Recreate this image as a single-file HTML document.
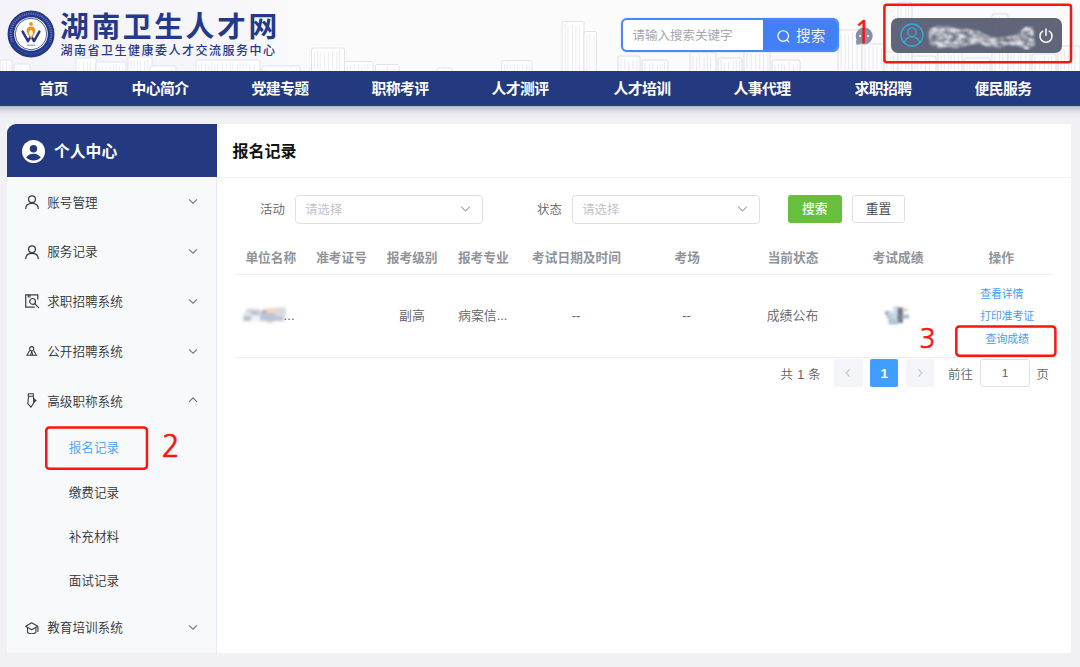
<!DOCTYPE html>
<html lang="zh-CN">
<head>
<meta charset="utf-8">
<title>湖南卫生人才网 - 报名记录</title>
<style>
*{box-sizing:border-box;margin:0;padding:0}
html,body{width:1080px;height:667px;overflow:hidden}
body{position:relative;background:#f0f0f5;font-family:"Liberation Sans","Noto Sans CJK SC",sans-serif;color:#303133;font-size:12.6px}
.abs{position:absolute}
.t{position:absolute;white-space:nowrap;line-height:1}
.c{transform:translate(-50%,-50%)}
.lc{transform:translate(0,-50%)}
/* header */
#hdr{left:0;top:0;width:1080px;height:71px;background:linear-gradient(90deg,#f3f3f9 0,#f5f5fa 180px,#fbfbfb 340px,#fbfbfb 100%);overflow:hidden}
#title{left:60px;top:13.2px;font-size:28.8px;font-weight:700;color:#24398a;letter-spacing:2.6px}
#subtitle{left:60.6px;top:44.5px;font-size:12px;font-weight:500;color:#24398a;letter-spacing:1.5px}
#nav{left:0;top:71px;width:1080px;height:35px;background:#233a80}
#navsh{left:-40px;top:71px;width:1160px;height:35px;background:#233a80;box-shadow:0 2px 8px rgba(60,60,80,.45);clip-path:inset(0 -10px -16px -10px)}
.nv{top:17.9px;color:#fff;font-weight:700;font-size:14.8px;letter-spacing:-.55px}
/* search */
#sbox{left:621px;top:18px;width:217.5px;height:34px;border:2px solid #4a87f8;border-radius:6px;background:#fff;overflow:hidden;box-shadow:0 0 1.5px rgba(69,131,247,.5)}
#sbtn{left:139.600px;top:-2px;width:80px;height:36px;background:#4380f8}
/* user pill */
#pill{left:891px;top:17.800px;width:171px;height:35px;border-radius:7px;background:rgba(84,89,112,.93)}
.redbox{border:2px solid #fb1510;position:absolute}
.rednum{color:#fb1510;font-family:"NanumGothic","Liberation Sans",sans-serif;font-weight:400;-webkit-text-stroke:.55px #fb1510}
/* sidebar */
#side{left:7px;top:124px;width:210px;height:529px;background:#f8f9fb;border-right:1px solid #e9eaf1}
#sidehd{left:0;top:0;width:210px;height:53px;background:#233a80;border-top-left-radius:9px}
#sidecorner{left:7px;top:124px;width:12px;height:12px;background:#fff}
.mi{left:40.2px;font-size:12.6px;color:#303133;font-weight:350}
.sub{left:61.7px;font-size:12.6px;color:#303133;font-weight:350}
/* content */
#main{left:217px;top:124px;width:854px;height:529px;background:#fff}
.sel{height:29px;border:1px solid #dcdfe6;border-radius:4px;background:#fff}
.ph{color:#c0c4cc;font-size:12.4px}
.th{color:#909399;font-weight:700;font-size:12.7px}
.td{color:#606266;font-size:12.9px;font-weight:350}
.lk{color:#409eff;font-size:10.8px}
.pg{font-size:12.4px;color:#606266;font-weight:350}
</style>
</head>
<body>
<!-- HEADER -->
<div id="hdr" class="abs">
<svg class="abs" style="left:0;top:0" width="1080" height="71" viewBox="0 0 1080 71"><path d="M0 72V61l1.500-1H11l1 1V72" fill="#fefefe" stroke="#e3e3e7" stroke-width="1"/><path d="M3.0 62.7V71.7M6.5 62.5V71.8M10.0 64.8V69.6" stroke="#e3e3e7" stroke-width=".800" fill="none" opacity=".8"/><path d="M14 72V65l1.500-1H29l1 1V72" fill="#fefefe" stroke="#e3e3e7" stroke-width="1"/><path d="M17.0 66.7V70.4M20.2 66.5V71.7M23.3 68.8V69.5M27.7 68.4V71.4" stroke="#e3e3e7" stroke-width=".800" fill="none" opacity=".8"/><path d="M76 72V59l1.500-1H95l1 1V72" fill="#fefefe" stroke="#e3e3e7" stroke-width="1"/><path d="M79.0 61.9V69.8M83.5 62.6V71.7M87.4 62.0V70.5M90.4 61.4V71.7" stroke="#e3e3e7" stroke-width=".800" fill="none" opacity=".8"/><path d="M96 72V63l1.500-1H125l1 1V72" fill="#fefefe" stroke="#e3e3e7" stroke-width="1"/><path d="M99.0 66.6V70.4M102.3 66.7V70.3M106.8 66.5V70.5M110.3 65.8V70.7M113.3 64.9V69.6M116.0 64.1V70.1M119.2 65.6V70.6M122.5 67.0V71.4" stroke="#e3e3e7" stroke-width=".800" fill="none" opacity=".8"/><path d="M128 72V58l1.500-1H151l1 1V72" fill="#fefefe" stroke="#e3e3e7" stroke-width="1"/><path d="M131.0 59.6V70.1M134.2 60.1V69.8M137.5 60.7V69.3M140.3 59.2V71.3M144.6 60.8V71.3M147.9 59.5V70.6" stroke="#e3e3e7" stroke-width=".800" fill="none" opacity=".8"/><path d="M150 72V67l1.500-1H175l1 1V72" fill="#fefefe" stroke="#e3e3e7" stroke-width="1"/><path d="M153.0 70.1V69.3M157.7 70.2V69.1M160.3 68.9V69.1M164.6 69.2V69.2M168.6 70.5V71.1M171.6 69.3V71.6" stroke="#e3e3e7" stroke-width=".800" fill="none" opacity=".8"/><path d="M196 72V61l1.500-1H259l1 1V72" fill="#fefefe" stroke="#e3e3e7" stroke-width="1"/><path d="M199.0 64.9V71.0M201.6 62.1V71.5M205.9 63.1V71.1M208.8 64.9V70.7M211.8 62.2V71.8M214.8 64.0V71.6M217.5 63.5V71.3M222.3 62.4V70.4M226.6 63.2V69.0M230.2 62.7V70.8M232.9 63.3V71.3M237.5 64.5V70.5M240.1 62.8V71.3M243.2 62.7V69.4M246.1 62.2V69.2M249.9 65.0V70.8M254.5 64.0V69.6" stroke="#e3e3e7" stroke-width=".800" fill="none" opacity=".8"/><path d="M262 72V67l1.500-1H299l1 1V72" fill="#fefefe" stroke="#e3e3e7" stroke-width="1"/><path d="M265.0 69.5V71.7M268.1 70.6V69.3M272.7 69.0V70.0M277.1 69.9V69.6M280.8 70.0V69.9M284.0 70.8V69.1M286.8 70.9V69.1M290.8 68.1V69.3M293.7 70.9V70.0M296.5 68.5V70.1" stroke="#e3e3e7" stroke-width=".800" fill="none" opacity=".8"/><path d="M311.5 72V49l1.500-1H343.5l1 1V72" fill="#fefefe" stroke="#e3e3e7" stroke-width="1"/><path d="M314.5 52.2V69.2M317.6 50.0V69.2M320.2 52.6V71.7M324.6 52.3V69.4M328.4 52.6V71.4M332.5 51.0V69.3M336.8 51.4V70.4M339.4 50.1V70.2" stroke="#e3e3e7" stroke-width=".800" fill="none" opacity=".8"/><path d="M344.5 72V62.5l1.500-1H372l1 1V72" fill="#fefefe" stroke="#e3e3e7" stroke-width="1"/><path d="M347.5 66.1V70.2M350.4 64.6V69.7M354.2 63.5V69.5M358.6 63.8V70.4M362.0 65.9V71.1M365.1 65.0V69.1M367.9 63.8V70.1" stroke="#e3e3e7" stroke-width=".800" fill="none" opacity=".8"/><path d="M375.5 72V65.5l1.500-1H398l1 1V72" fill="#fefefe" stroke="#e3e3e7" stroke-width="1"/><path d="M378.5 68.0V70.7M383.0 68.8V71.8M387.5 67.1V71.1M392.0 67.8V69.6M394.9 69.1V71.5" stroke="#e3e3e7" stroke-width=".800" fill="none" opacity=".8"/><path d="M437 72V69l1.500-1H451l1 1V72" fill="#fefefe" stroke="#e3e3e7" stroke-width="1"/><path d="M440.0 71.5V71.0M443.8 72.7V69.9M446.4 70.9V70.4" stroke="#e3e3e7" stroke-width=".800" fill="none" opacity=".8"/><path d="M501.5 72V61.5l1.500-1H531l1 1V72" fill="#fefefe" stroke="#e3e3e7" stroke-width="1"/><path d="M504.5 64.6V70.5M507.3 63.2V69.5M510.7 64.8V69.0M514.6 64.5V70.2M517.9 65.2V70.6M522.5 63.4V69.4M526.9 64.3V70.7M529.8 64.8V70.9" stroke="#e3e3e7" stroke-width=".800" fill="none" opacity=".8"/><path d="M562 72V22.5l1.500-1H583l1 1V72" fill="#fefefe" stroke="#e3e3e7" stroke-width="1"/><path d="M565.0 23.9V71.8M567.9 25.9V71.5M572.5 24.6V70.3M575.9 25.4V71.7M579.4 26.3V71.5" stroke="#e3e3e7" stroke-width=".800" fill="none" opacity=".8"/><path d="M584 72V32.5l1.500-1H595.5l1 1V72" fill="#fefefe" stroke="#e3e3e7" stroke-width="1"/><path d="M587.0 34.5V71.1M589.7 33.6V69.2M594.1 35.9V69.6" stroke="#e3e3e7" stroke-width=".800" fill="none" opacity=".8"/><path d="M618 72V57l1.500-1H639l1 1V72" fill="#fdfdfd" stroke="#dedee2" stroke-width="1"/><path d="M621.0 58.5V70.2M624.7 59.7V69.2M629.0 60.9V71.6M633.0 60.0V69.8M637.0 60.5V71.1" stroke="#dedee2" stroke-width=".800" fill="none" opacity=".8"/><path d="M642 72V61l1.500-1H667l1 1V72" fill="#fdfdfd" stroke="#dedee2" stroke-width="1"/><path d="M645.0 63.2V70.2M649.6 64.1V71.1M652.7 63.0V70.1M657.5 64.7V70.8M661.0 64.5V71.1M664.5 62.0V71.4" stroke="#dedee2" stroke-width=".800" fill="none" opacity=".8"/><path d="M690 72V53l1.500-1H715l1 1V72" fill="#fdfdfd" stroke="#dedee2" stroke-width="1"/><path d="M693.0 56.1V70.2M696.4 56.9V70.1M699.3 54.2V69.1M704.1 56.8V70.2M707.4 54.3V71.2M710.5 56.8V69.3" stroke="#dedee2" stroke-width=".800" fill="none" opacity=".8"/><path d="M718 72V59l1.500-1H741l1 1V72" fill="#fdfdfd" stroke="#dedee2" stroke-width="1"/><path d="M721.0 60.4V71.3M724.3 62.8V71.5M728.6 62.0V70.4M733.3 60.8V70.4M736.3 60.3V71.9M739.6 60.4V71.8" stroke="#dedee2" stroke-width=".800" fill="none" opacity=".8"/><path d="M744 72V51l1.500-1H769l1 1V72" fill="#fdfdfd" stroke="#dedee2" stroke-width="1"/><path d="M747.0 52.9V69.3M751.1 54.2V70.0M755.8 54.6V69.8M759.7 54.1V69.8M763.5 53.5V71.5M767.9 53.5V71.8" stroke="#dedee2" stroke-width=".800" fill="none" opacity=".8"/><path d="M772 72V61l1.500-1H799l1 1V72" fill="#fdfdfd" stroke="#dedee2" stroke-width="1"/><path d="M775.0 64.6V71.2M778.5 64.0V69.4M781.8 63.2V70.7M784.4 64.6V71.9M789.2 62.5V71.5M793.6 64.5V71.3M797.4 63.4V69.8" stroke="#dedee2" stroke-width=".800" fill="none" opacity=".8"/><path d="M838 72V31l1.500-1H861l1 1V72" fill="#fdfdfd" stroke="#dedee2" stroke-width="1"/><path d="M841.0 34.5V69.0M845.2 34.8V69.2M848.6 34.5V69.5M852.5 32.3V70.1M857.1 32.9V70.1" stroke="#dedee2" stroke-width=".800" fill="none" opacity=".8"/><path d="M862 72V45l1.500-1H883l1 1V72" fill="#fdfdfd" stroke="#dedee2" stroke-width="1"/><path d="M865.0 47.8V71.9M869.0 46.8V69.4M873.0 46.9V69.3M877.0 47.0V69.5M881.6 48.7V69.4" stroke="#dedee2" stroke-width=".800" fill="none" opacity=".8"/><path d="M884 72V53l1.500-1H905l1 1V72" fill="#fdfdfd" stroke="#dedee2" stroke-width="1"/><path d="M887.0 56.1V70.2M890.8 57.0V70.9M893.5 56.1V70.5M897.3 55.8V71.3M900.4 54.2V69.7" stroke="#dedee2" stroke-width=".800" fill="none" opacity=".8"/><path d="M898 72V3l1.500-1H911l1 1V72" fill="#fdfdfd" stroke="#dedee2" stroke-width="1"/><path d="M901.0 6.1V71.6M905.8 6.5V70.5M908.4 6.5V70.1" stroke="#dedee2" stroke-width=".800" fill="none" opacity=".8"/><path d="M912 72V57l1.500-1H935l1 1V72" fill="#fdfdfd" stroke="#dedee2" stroke-width="1"/><path d="M915.0 58.1V69.8M917.7 59.4V71.6M921.1 60.7V69.8M925.5 58.9V70.8M929.4 58.1V70.8" stroke="#dedee2" stroke-width=".800" fill="none" opacity=".8"/><path d="M938 72V51l1.500-1H961l1 1V72" fill="#fdfdfd" stroke="#dedee2" stroke-width="1"/><path d="M941.0 54.3V69.4M944.3 54.1V69.6M948.4 53.3V71.5M951.0 54.7V69.2M954.3 54.3V70.8M958.2 54.5V71.0" stroke="#dedee2" stroke-width=".800" fill="none" opacity=".8"/><path d="M964 72V59l1.500-1H989l1 1V72" fill="#fdfdfd" stroke="#dedee2" stroke-width="1"/><path d="M967.0 60.8V70.5M969.7 60.8V71.1M974.3 60.4V69.7M977.1 63.0V71.5M979.9 60.6V69.2M983.9 62.7V70.5M986.8 61.0V70.6" stroke="#dedee2" stroke-width=".800" fill="none" opacity=".8"/><path d="M992 72V15l1.500-1H1007l1 1V72" fill="#fdfdfd" stroke="#dedee2" stroke-width="1"/><path d="M995.0 16.5V71.3M999.5 16.3V69.1M1002.7 17.7V70.0" stroke="#dedee2" stroke-width=".800" fill="none" opacity=".8"/><path d="M1008 72V41l1.500-1H1029l1 1V72" fill="#fdfdfd" stroke="#dedee2" stroke-width="1"/><path d="M1011.0 42.2V69.5M1014.0 44.2V71.9M1018.3 42.5V71.4M1021.0 43.0V71.0M1025.7 43.8V70.9" stroke="#dedee2" stroke-width=".800" fill="none" opacity=".8"/><path d="M1032 72V55l1.500-1H1055l1 1V72" fill="#fdfdfd" stroke="#dedee2" stroke-width="1"/><path d="M1035.0 56.5V71.4M1039.7 58.9V69.9M1044.5 56.2V69.3M1048.6 58.0V69.5M1051.4 56.6V71.6" stroke="#dedee2" stroke-width=".800" fill="none" opacity=".8"/><path d="M1058 72V47l1.500-1H1079l1 1V72" fill="#fdfdfd" stroke="#dedee2" stroke-width="1"/><path d="M1061.0 49.6V70.4M1064.4 50.2V69.5M1068.7 48.1V71.5M1071.7 48.7V70.3M1074.8 49.9V71.0" stroke="#dedee2" stroke-width=".800" fill="none" opacity=".8"/></svg>
</div>
<!-- logo -->
<svg class="abs" style="left:6.5px;top:10px" width="48" height="48" viewBox="0 0 48 48">
<circle cx="24" cy="24" r="23.5" fill="#24398a"/>
<path d="M5.400 31.800A20.200 20.200 0 1 1 42.600 31.800" fill="none" stroke="#b4bcdc" stroke-width="2.300" stroke-dasharray="1.300 1" opacity=".42"/><path d="M7.600 35.400A20.200 20.200 0 0 0 40.400 35.400" fill="none" stroke="#b4bcdc" stroke-width="1.200" stroke-dasharray=".600 .700" opacity=".3"/>
<circle cx="24" cy="24" r="16.8" fill="#fff"/>
<circle cx="24" cy="24" r="15.7" fill="none" stroke="#24398a" stroke-width=".8"/>
<path d="M15.6 21.6L21 31.2 24 26l3 5.200 5.400-9.600" fill="none" stroke="#24398a" stroke-width="2.500" stroke-linecap="round" stroke-linejoin="round"/>
<path d="M24 16.600c-2.700 0-4.400 1.900-4.400 4.100 0 2.400 2.300 4.700 4.400 8.500 2.100-3.800 4.400-6.100 4.400-8.500 0-2.200-1.700-4.100-4.400-4.100z" fill="#ee9220"/>
<path d="M24 19.600c1.300 1.300 2 2.400 2 3.500 0 1.100-.9 2-2 3.800-1.100-1.800-2-2.700-2-3.800 0-1.100.7-2.200 2-3.500z" fill="#fff"/>
<circle cx="24" cy="13.900" r="1.900" fill="#ee9220"/>
<rect x="19.800" y="34.600" width="8.400" height="1.100" fill="#8d97c2"/>
</svg>
<div id="title" class="t">湖南卫生人才网</div>
<div id="subtitle" class="t">湖南省卫生健康委人才交流服务中心</div>

<!-- search -->
<div id="sbox" class="abs">
  <div class="t lc" style="left:9.400px;top:16.200px;font-size:12.500px;color:#a4a8b0">请输入搜索关键字</div>
  <div id="sbtn" class="abs">
    <svg class="abs" style="left:13px;top:11px" width="15" height="15" viewBox="0 0 15 15" fill="none" stroke="#fff" stroke-width="1.150"><circle cx="7.200" cy="7" r="5.300"/><path d="M10.900 10.900l2.400 2.500"/></svg>
    <div class="t lc" style="left:33.500px;top:18.200px;font-size:14.600px;color:#fff;font-weight:350">搜索</div>
  </div>
</div>
<!-- bell-ish + 1 -->
<svg class="abs" style="left:854.600px;top:27.200px" width="19" height="19" viewBox="0 0 19 19"><circle cx="9.200" cy="9" r="8.500" fill="#8590a8"/><path d="M1.200 12.500v5h5z" fill="#8590a8"/><circle cx="5.100" cy="9.100" r="1" fill="#fff"/><circle cx="13" cy="9.100" r="1" fill="#fff"/></svg>
<div class="t rednum" style="left:853.800px;top:17.400px;font-size:30.500px">1</div>
<!-- user pill -->
<svg width="0" height="0" style="position:absolute"><defs>
<filter id="nz" x="-10%" y="-30%" width="120%" height="160%"><feTurbulence type="fractalNoise" baseFrequency="0.15 0.3" numOctaves="3" seed="11" result="n"/><feColorMatrix in="n" type="matrix" values="0 0 0 0 1  0 0 0 0 1  0 0 0 0 1  0 0 0 2.400 -.620" result="a"/><feComposite in="a" in2="SourceGraphic" operator="in" result="c"/><feGaussianBlur in="c" stdDeviation="0.900"/></filter>
<filter id="nz2" x="-20%" y="-30%" width="140%" height="160%"><feTurbulence type="fractalNoise" baseFrequency="0.160 0.260" numOctaves="2" seed="3" result="n"/><feColorMatrix in="n" type="matrix" values="0 0 0 0 .580  0 0 0 0 .620  0 0 0 0 .700  0 0 0 3.600 -1.300" result="a"/><feComposite in="a" in2="SourceGraphic" operator="in" result="c"/><feGaussianBlur in="c" stdDeviation="0.600"/></filter>
<filter id="bl2" x="-20%" y="-20%" width="140%" height="140%"><feGaussianBlur stdDeviation="1.100"/></filter>
<filter id="bl1" x="-20%" y="-40%" width="140%" height="180%"><feGaussianBlur stdDeviation="1.500"/></filter>
</defs></svg>
<div id="pill" class="abs">
  <svg class="abs" style="left:8.500px;top:5.500px" width="24" height="24" viewBox="0 0 24 24" fill="none" stroke="#3aa9de" stroke-width="1.300"><circle cx="12" cy="12" r="11"/><circle cx="12" cy="9.100" r="4.300"/><path d="M4.300 19.800c1-3.900 4-6 7.700-6s6.700 2.100 7.700 6"/></svg>
  <svg class="abs" style="left:33px;top:4px" width="116" height="28" viewBox="0 0 116 28"><g filter="url(#nz)" opacity=".82"><path d="M4 8l8-4 12 0 10 3 10 0 10 2 8 4 10 3 10-1 10-2 9-8 8 0 2 19-8 4-9-4-10-1-10 3-10-1-10-3-10 1-10 3-10-1-10 1-8-4z" fill="#fff"/></g></svg>
  <svg class="abs" style="left:147.400px;top:10.500px" width="16" height="16" viewBox="0 0 16 16" fill="none" stroke="#fff" stroke-width="1.500" stroke-linecap="round"><path d="M8 1v6.200"/><path d="M4.700 3.200a6 6 0 1 0 6.600 0"/></svg>
</div>

<!-- NAV -->
<div id="navsh" class="abs"></div>
<div id="nav" class="abs">
  <div class="t c nv" style="left:53.500px">首页</div>
  <div class="t c nv" style="left:160px">中心简介</div>
  <div class="t c nv" style="left:280px">党建专题</div>
  <div class="t c nv" style="left:400px">职称考评</div>
  <div class="t c nv" style="left:520px">人才测评</div>
  <div class="t c nv" style="left:642px">人才培训</div>
  <div class="t c nv" style="left:762px">人事代理</div>
  <div class="t c nv" style="left:883px">求职招聘</div>
  <div class="t c nv" style="left:1003px">便民服务</div>
</div>

<!-- SIDEBAR -->
<div id="sidecorner" class="abs"></div>
<div id="side" class="abs">
  <div id="sidehd" class="abs">
    <svg class="abs" style="left:15px;top:16px" width="23" height="23" viewBox="0 0 23 23"><circle cx="11.500" cy="11.500" r="11.500" fill="#fff"/><circle cx="11.500" cy="8.800" r="3.700" fill="#233a80"/><path d="M4.200 17.600c1.400-2.600 4-3.900 7.300-3.900s5.900 1.300 7.300 3.900c-1.800 2-4.400 3-7.300 3s-5.500-1-7.300-3z" fill="#233a80"/></svg>
    <div class="t lc" style="left:47px;top:27.800px;font-size:15.800px;font-weight:700;color:#fff">个人中心</div>
  </div>
  <!-- menu rows placed relative to #side (top 124) -->
  <div class="t lc mi" style="top:78.700px">账号管理</div>
  <div class="t lc mi" style="top:128.400px">服务记录</div>
  <div class="t lc mi" style="top:178.200px">求职招聘系统</div>
  <div class="t lc mi" style="top:227.900px">公开招聘系统</div>
  <div class="t lc mi" style="top:277.600px">高级职称系统</div>
  <div class="t lc sub" style="top:324px;color:#409eff">报名记录</div>
  <div class="t lc sub" style="top:368.500px">缴费记录</div>
  <div class="t lc sub" style="top:413px">补充材料</div>
  <div class="t lc sub" style="top:457px">面试记录</div>
  <div class="t lc mi" style="top:504.200px">教育培训系统</div>
  <!-- icons -->
  <svg class="abs" style="left:18px;top:71px" width="14" height="14" viewBox="0 0 14 14" fill="none" stroke="#3c3c3e" stroke-width="1.250"><circle cx="7" cy="4.300" r="3.400"/><path d="M.700 13.900c0-3.500 2.600-5.500 6.300-5.500s6.300 2 6.300 5.500"/></svg>
  <svg class="abs" style="left:18px;top:121.200px" width="14" height="14" viewBox="0 0 14 14" fill="none" stroke="#3c3c3e" stroke-width="1.250"><circle cx="7" cy="4.300" r="3.400"/><path d="M.700 13.900c0-3.500 2.600-5.500 6.300-5.500s6.300 2 6.300 5.500"/></svg>
  <svg class="abs" style="left:18px;top:170.400px" width="14.500" height="14.500" viewBox="0 0 14.500 14.500" fill="none" stroke="#3c3c3e" stroke-width="1.200"><path d="M12.800 5.400V.800H.700v12.400h9"/><path d="M3.300 .800v2.600M4.900 .800v2.600"/><circle cx="7.600" cy="7.400" r="2.900"/><path d="M9.700 9.600l4.200 4.200"/></svg>
  <svg class="abs" style="left:19.400px;top:222px" width="11.400" height="10" viewBox="0 0 11.400 10" fill="none" stroke="#3c3c3e" stroke-width="1.050"><circle cx="5.700" cy="2.700" r="2.100"/><path d="M3.900 4.200L.900 9.300h9.600L7.500 4.200"/><path d="M5.700 5.200L4.600 9.300M5.700 5.200l1.100 4.100"/></svg>
  <svg class="abs" style="left:20.300px;top:269.400px" width="10" height="15" viewBox="0 0 10 15" fill="none" stroke="#3c3c3e" stroke-width="1.100" stroke-linejoin="round"><path d="M1.300 .800h5v2.500h-5z"/><path d="M1.600 3.300L.800 10.700l3.100 3.500 3-4.600-.500-6.300"/><path d="M6.600 5.200l2.800 2.300-2.700 2.200" fill="#3c3c3e" stroke-width=".600"/></svg>
  <svg class="abs" style="left:18px;top:497.500px" width="14" height="12.500" viewBox="0 0 14 12.500" fill="none" stroke="#3c3c3e" stroke-width="1.100" stroke-linejoin="round"><path d="M6.700 .800L.700 4.300l6 3.500 6-3.500z"/><path d="M2.500 5.600v4.800c1.100 1 2.600 1.500 4.200 1.500s3.100-.500 4.200-1.500V5.600"/><path d="M12.900 4.600v5.300"/></svg>
  <!-- arrows -->
  <svg class="abs" style="left:181.200px;top:73.4px" width="10" height="8" viewBox="0 0 10 8" fill="none" stroke="#78787a" stroke-width="1.100"><path d="M1 2.300L5 6.200l4-3.900"/></svg>
  <svg class="abs" style="left:181.200px;top:123.4px" width="10" height="8" viewBox="0 0 10 8" fill="none" stroke="#78787a" stroke-width="1.100"><path d="M1 2.300L5 6.200l4-3.900"/></svg>
  <svg class="abs" style="left:181.200px;top:173.4px" width="10" height="8" viewBox="0 0 10 8" fill="none" stroke="#78787a" stroke-width="1.100"><path d="M1 2.300L5 6.200l4-3.900"/></svg>
  <svg class="abs" style="left:181.200px;top:223.4px" width="10" height="8" viewBox="0 0 10 8" fill="none" stroke="#78787a" stroke-width="1.100"><path d="M1 2.300L5 6.200l4-3.900"/></svg>
  <svg class="abs" style="left:181.200px;top:271.9px" width="10" height="8" viewBox="0 0 10 8" fill="none" stroke="#707072" stroke-width="1.100"><path d="M1 5.900L5 1.800l4 4.100"/></svg>
  <svg class="abs" style="left:181.200px;top:499.4px" width="10" height="8" viewBox="0 0 10 8" fill="none" stroke="#78787a" stroke-width="1.100"><path d="M1 2.300L5 6.200l4-3.900"/></svg>
</div>
<div class="t rednum" style="left:161.500px;top:430.500px;font-size:30px">2</div>

<!-- MAIN -->
<div id="main" class="abs">
  <div class="t lc" style="left:15.500px;top:27.600px;font-size:16px;font-weight:700;color:#111">报名记录</div>
  <div class="abs" style="left:0;top:52.500px;width:854px;height:1px;background:#f3f3f5"></div>

  <!-- filter row : coords relative to #main (217,124) -->
  <div class="t lc" style="left:43px;top:86.300px;font-size:12.400px;color:#606266;font-weight:350">活动</div>
  <div class="abs sel" style="left:77.700px;top:70.700px;width:188px"><div class="t lc ph" style="left:9.500px;top:14.300px">请选择</div>
    <svg class="abs" style="left:164.500px;top:9.300px" width="11" height="8" viewBox="0 0 11 8" fill="none" stroke="#a6aab2" stroke-width="1.150"><path d="M1 1.600L5.500 6l4.500-4.400"/></svg></div>
  <div class="t lc" style="left:320px;top:86.300px;font-size:12.400px;color:#606266;font-weight:350">状态</div>
  <div class="abs sel" style="left:354.700px;top:70.700px;width:188.300px"><div class="t lc ph" style="left:9.500px;top:14.300px">请选择</div>
    <svg class="abs" style="left:164.500px;top:9.300px" width="11" height="8" viewBox="0 0 11 8" fill="none" stroke="#a6aab2" stroke-width="1.150"><path d="M1 1.600L5.500 6l4.500-4.400"/></svg></div>
  <div class="abs" style="left:571px;top:70.700px;width:53.500px;height:28px;border-radius:3px;background:#66c03b"><div class="t c" style="left:50%;top:14.800px;color:#fff;font-weight:500;font-size:12.700px">搜索</div></div>
  <div class="abs" style="left:634.800px;top:70.700px;width:53.400px;height:28px;border-radius:3px;border:1px solid #dcdfe6;background:#fff"><div class="t c" style="left:50%;top:13.800px;color:#3a3c40;font-size:12.700px;font-weight:350">重置</div></div>
  <!-- table header -->
  <div class="t c th" style="left:53.800px;top:133.700px">单位名称</div>
  <div class="t c th" style="left:124.500px;top:133.700px">准考证号</div>
  <div class="t c th" style="left:195.200px;top:133.700px">报考级别</div>
  <div class="t c th" style="left:266.300px;top:133.700px">报考专业</div>
  <div class="t c th" style="left:359.500px;top:133.700px">考试日期及时间</div>
  <div class="t c th" style="left:470.200px;top:133.700px">考场</div>
  <div class="t c th" style="left:576px;top:133.700px">当前状态</div>
  <div class="t c th" style="left:681px;top:133.700px">考试成绩</div>
  <div class="t c th" style="left:784.300px;top:133.700px">操作</div>
  <div class="abs" style="left:18px;top:149.800px;width:818px;height:1px;background:#ebeef5"></div>
  <!-- row -->
  <svg class="abs" style="left:21px;top:180px" width="56" height="24" viewBox="0 0 56 24"><g filter="url(#bl1)" opacity=".8">
    <rect x="8" y="5" width="14" height="4" fill="#c4c4ca"/>
    <rect x="13" y="8.500" width="8" height="2.500" fill="#8c8c90"/>
    <rect x="5" y="10" width="17" height="6.500" fill="#c2d2e4"/>
    <rect x="6" y="13.500" width="8" height="3" fill="#8f98a6"/>
    <rect x="13" y="12" width="10" height="4" fill="#e8f2fa"/>
    <rect x="22" y="8" width="24" height="9" fill="#a9b5ca"/>
    <rect x="27" y="4" width="10" height="5" fill="#f1cda8"/>
    <rect x="37" y="3.500" width="11" height="9" fill="#cfd0d6"/>
    <rect x="24" y="6" width="4" height="3" fill="#7c8694"/>
    <rect x="29" y="17" width="6" height="1.500" fill="#d8b48c"/>
  </g></svg>
  <div class="t lc td" style="left:66.500px;top:192px;letter-spacing:.2px;color:#50607c">...</div>
  <div class="t c td" style="left:195px;top:192.400px">副高</div>
  <div class="t lc td" style="left:241px;top:192.400px">病案信...</div>
  <div class="t c td" style="left:359px;top:192.400px">--</div>
  <div class="t c td" style="left:469.500px;top:192.400px">--</div>
  <div class="t c td" style="left:575.500px;top:192.400px">成绩公布</div>
  <svg class="abs" style="left:663px;top:177px" width="34" height="28" viewBox="0 0 34 28"><g filter="url(#bl2)">
    <rect x="13" y="5" width="6" height="7" fill="#d6deee"/>
    <rect x="5" y="10" width="5.500" height="4" fill="#a4a8c6"/>
    <rect x="8" y="11" width="14" height="8" fill="#c6dde6"/>
    <rect x="17.500" y="6.500" width="5.500" height="8" fill="#6f7782"/>
    <rect x="22.500" y="7.500" width="5" height="3" fill="#e2cdb6"/>
    <rect x="17" y="14.500" width="6" height="7.500" fill="#78818e"/>
    <rect x="22.500" y="13.500" width="6.500" height="4" fill="#b0b8cc"/>
    <rect x="8.500" y="18" width="9.500" height="5.500" fill="#b4c2d6"/>
    <rect x="6.500" y="14" width="5.500" height="3.500" fill="#c4c4ca"/>
  </g></svg>
  <div class="t lc lk" style="left:763.200px;top:169.800px">查看详情</div>
  <div class="t lc lk" style="left:763.200px;top:191.600px">打印准考证</div>
  <div class="t lc lk" style="left:768.600px;top:215.200px">查询成绩</div>
  <div class="abs" style="left:18px;top:232.600px;width:818px;height:1px;background:#ebeef5"></div>
  <!-- pagination -->
  <div class="t lc pg" style="left:563.500px;top:250.800px;word-spacing:.8px">共 1 条</div>
  <div class="abs" style="left:617.300px;top:235.400px;width:28.300px;height:28px;border-radius:2px;background:#f4f5f8"><svg class="abs" style="left:10px;top:9px" width="8" height="10" viewBox="0 0 8 10" fill="none" stroke="#c0c4cc" stroke-width="1.100"><path d="M5.600 1.400L2.200 5l3.400 3.600"/></svg></div>
  <div class="abs" style="left:653.300px;top:235.400px;width:28px;height:28px;border-radius:2px;background:#409eff"><div class="t c" style="left:50%;top:14.300px;color:#fff;font-weight:700;font-size:13.600px">1</div></div>
  <div class="abs" style="left:688.500px;top:235.400px;width:28.300px;height:28px;border-radius:2px;background:#f4f5f8"><svg class="abs" style="left:10px;top:9px" width="8" height="10" viewBox="0 0 8 10" fill="none" stroke="#c0c4cc" stroke-width="1.100"><path d="M2.400 1.400L5.800 5 2.400 8.600"/></svg></div>
  <div class="t lc pg" style="left:731px;top:250.800px">前往</div>
  <div class="abs" style="left:763.300px;top:235px;width:49.300px;height:28.200px;border-radius:3px;border:1px solid #dcdfe6;background:#fff"><div class="t c pg" style="left:50%;top:14px;font-size:11.800px">1</div></div>
  <div class="t lc pg" style="left:819.500px;top:250.800px">页</div>
</div>
<div class="t rednum" style="left:919.300px;top:325.300px;font-size:27px">3</div>
<svg class="abs" style="left:0;top:0;pointer-events:none" width="1080" height="667" viewBox="0 0 1080 667" fill="none" stroke="#fb1510" stroke-width="2.500">
<rect x="884.400" y="4.650" width="186.600" height="57.700" rx="2.500"/>
<rect x="46.250" y="427.550" width="100.700" height="41.300" rx="3"/>
<rect x="956.300" y="326.400" width="99.100" height="29.300" rx="3"/>
</svg>
</body>
</html>
